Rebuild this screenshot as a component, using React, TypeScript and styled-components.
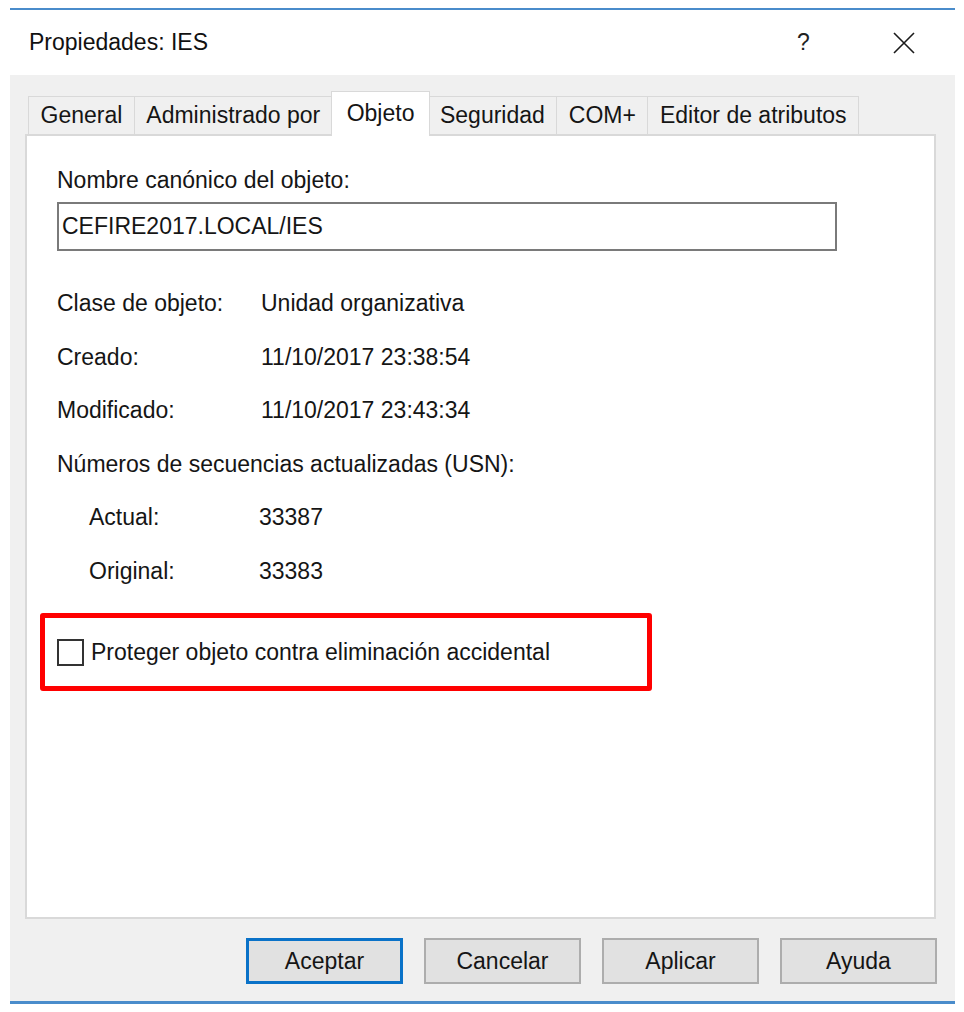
import React from 'react';
import styled, { createGlobalStyle } from 'styled-components';

const Global = createGlobalStyle`
  html, body { margin: 0; padding: 0; background: #ffffff; }
  body {
    font-family: "Liberation Sans", Arial, sans-serif;
    color: #151515;
    -webkit-font-smoothing: antialiased;
  }
  * { box-sizing: border-box; }
`;

const Page = styled.div`
  padding: 8px 0 0 10px;
`;

const Window = styled.div`
  width: 945px;
  border-top: 2px solid #4a8ccb;
  border-bottom: 3px solid #4a8ccb;
  display: flex;
  flex-direction: column;
`;

const TitleBar = styled.div`
  height: 65px;
  background: #ffffff;
  display: flex;
  align-items: center;
  padding-left: 19px;
`;

const Title = styled.div`
  flex: 1;
  font-size: 23px;
  color: #111;
`;

const HelpButton = styled.div`
  width: 14px;
  font-size: 23px;
  color: #222;
  margin-right: 82px;
`;

const CloseButton = styled.div`
  width: 22px;
  height: 22px;
  margin-right: 40px;
  display: flex;
`;

const Body = styled.div`
  background: #f0f0f0;
  height: 926px;
  display: flex;
  flex-direction: column;
`;

const TabStrip = styled.div`
  display: flex;
  align-items: flex-end;
  padding: 16px 0 0 19px;
  height: 61px;
  margin-bottom: -2px;
  position: relative;
  z-index: 1;
`;

const Tab = styled.div<{ $active?: boolean }>`
  height: ${(p) => (p.$active ? '45px' : '38px')};
  margin: ${(p) => (p.$active ? '0 -2px 0 -2px' : '0 0 2px -1px')};
  padding: ${(p) => (p.$active ? '0 15px 2px' : '0 11.5px')};
  background: ${(p) => (p.$active ? '#ffffff' : '#f0f0f0')};
  border: 1px solid #d9d9d9;
  border-bottom: none;
  display: flex;
  align-items: center;
  font-size: 23px;
  color: #151515;
  white-space: nowrap;
  position: relative;
  z-index: ${(p) => (p.$active ? 2 : 1)};
`;

const Panel = styled.div`
  margin: 0 19px 0 15px;
  height: 785px;
  background: #ffffff;
  border: 2px solid #d9d9d9;
  padding: 31px 0 0 30px;
  display: flex;
  flex-direction: column;
  align-items: flex-start;
`;

const FieldLabel = styled.div`
  font-size: 23px;
  line-height: 26px;
`;

const TextField = styled.div`
  margin-top: 9px;
  width: 780px;
  height: 49px;
  border: 2px solid #7a7a7a;
  padding-left: 3px;
  display: flex;
  align-items: center;
  font-size: 23px;
  background: #fff;
`;

const InfoList = styled.div`
  margin-top: 39px;
  display: flex;
  flex-direction: column;
  gap: 27.5px;
`;

const InfoRow = styled.div<{ $indent?: boolean }>`
  display: grid;
  grid-template-columns: ${(p) => (p.$indent ? '170px' : '204px')} auto;
  padding-left: ${(p) => (p.$indent ? '32px' : '0')};
  font-size: 23px;
  line-height: 26px;
`;

const Heading = styled.div`
  font-size: 23px;
  line-height: 26px;
`;

const Highlight = styled.div`
  margin: 29.5px 0 0 -17px;
  width: 612px;
  height: 78px;
  border: 5px solid #ff0000;
  border-radius: 3px;
  display: flex;
  align-items: center;
  padding: 0 0 0 12px;
`;

const CheckBox = styled.div`
  width: 27px;
  height: 27px;
  border: 2px solid #333333;
  background: #ffffff;
  flex-shrink: 0;
`;

const CheckLabel = styled.div`
  margin-left: 7px;
  font-size: 23px;
  line-height: 26px;
`;

const ButtonRow = styled.div`
  margin-top: 19px;
  display: flex;
  justify-content: flex-end;
  gap: 21px;
  padding-right: 18px;
`;

const Button = styled.div<{ $primary?: boolean }>`
  width: 157px;
  height: 46px;
  background: #e1e1e1;
  border: ${(p) => (p.$primary ? '3px solid #0a72c8' : '2px solid #adadad')};
  display: flex;
  align-items: center;
  justify-content: center;
  font-size: 23px;
  color: #151515;
`;

const tabs = ['General', 'Administrado por', 'Objeto', 'Seguridad', 'COM+', 'Editor de atributos'];

export default function App() {
  return (
    <Page>
      <Global />
      <Window>
        <TitleBar>
          <Title>Propiedades: IES</Title>
          <HelpButton>?</HelpButton>
          <CloseButton>
            <svg width="22" height="22" viewBox="0 0 22 22">
              <path d="M1 1 L21 21 M21 1 L1 21" stroke="#1a1a1a" strokeWidth="1.6" fill="none" />
            </svg>
          </CloseButton>
        </TitleBar>
        <Body>
          <TabStrip>
            {tabs.map((t) => (
              <Tab key={t} $active={t === 'Objeto'}>
                {t}
              </Tab>
            ))}
          </TabStrip>
          <Panel>
            <FieldLabel>Nombre canónico del objeto:</FieldLabel>
            <TextField>CEFIRE2017.LOCAL/IES</TextField>
            <InfoList>
              <InfoRow>
                <span>Clase de objeto:</span>
                <span>Unidad organizativa</span>
              </InfoRow>
              <InfoRow>
                <span>Creado:</span>
                <span>11/10/2017 23:38:54</span>
              </InfoRow>
              <InfoRow>
                <span>Modificado:</span>
                <span>11/10/2017 23:43:34</span>
              </InfoRow>
              <Heading>Números de secuencias actualizadas (USN):</Heading>
              <InfoRow $indent>
                <span>Actual:</span>
                <span>33387</span>
              </InfoRow>
              <InfoRow $indent>
                <span>Original:</span>
                <span>33383</span>
              </InfoRow>
            </InfoList>
            <Highlight>
              <CheckBox />
              <CheckLabel>Proteger objeto contra eliminación accidental</CheckLabel>
            </Highlight>
          </Panel>
          <ButtonRow>
            <Button $primary>Aceptar</Button>
            <Button>Cancelar</Button>
            <Button>Aplicar</Button>
            <Button>Ayuda</Button>
          </ButtonRow>
        </Body>
      </Window>
    </Page>
  );
}
